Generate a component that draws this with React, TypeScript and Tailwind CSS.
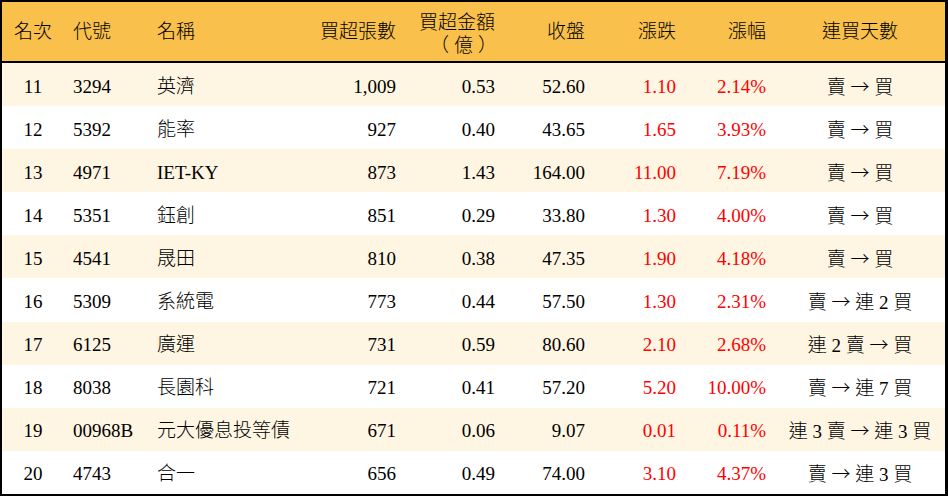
const rows = [
  { rank: 11, code: '3294', name: '英濟', vol: '1,009', amt: '0.53', close: '52.60', chg: '1.10', pct: '2.14%', days: '賣 → 買' },
  { rank: 12, code: '5392', name: '能率', vol: '927', amt: '0.40', close: '43.65', chg: '1.65', pct: '3.93%', days: '賣 → 買' },
  { rank: 13, code: '4971', name: 'IET-KY', vol: '873', amt: '1.43', close: '164.00', chg: '11.00', pct: '7.19%', days: '賣 → 買' },
  { rank: 14, code: '5351', name: '鈺創', vol: '851', amt: '0.29', close: '33.80', chg: '1.30', pct: '4.00%', days: '賣 → 買' },
  { rank: 15, code: '4541', name: '晟田', vol: '810', amt: '0.38', close: '47.35', chg: '1.90', pct: '4.18%', days: '賣 → 買' },
  { rank: 16, code: '5309', name: '系統電', vol: '773', amt: '0.44', close: '57.50', chg: '1.30', pct: '2.31%', days: '賣 → 連 2 買' },
  { rank: 17, code: '6125', name: '廣運', vol: '731', amt: '0.59', close: '80.60', chg: '2.10', pct: '2.68%', days: '連 2 賣 → 買' },
  { rank: 18, code: '8038', name: '長園科', vol: '721', amt: '0.41', close: '57.20', chg: '5.20', pct: '10.00%', days: '賣 → 連 7 買' },
  { rank: 19, code: '00968B', name: '元大優息投等債', vol: '671', amt: '0.06', close: '9.07', chg: '0.01', pct: '0.11%', days: '連 3 賣 → 連 3 買' },
  { rank: 20, code: '4743', name: '合一', vol: '656', amt: '0.49', close: '74.00', chg: '3.10', pct: '4.37%', days: '賣 → 連 3 買' },
];

const grid = 'grid grid-cols-[62px_84px_152px_96px_99px_90px_91px_90px_179px] items-center';
const cjk = { fontFamily: '"Noto Sans CJK TC", sans-serif' };

function Days({ text }: { text: string }) {
  const [from, to] = text.split(' → ');
  return (
    <>
      {from} <span style={cjk}>→</span> {to}
    </>
  );
}

export default function App() {
  return (
    <div
      className="w-[948px] h-[496px] bg-white text-black border-2 border-r-[3px] border-black overflow-hidden text-[19px] leading-none font-light"
      style={{ fontFamily: '"Liberation Serif", "Noto Sans CJK TC", serif' }}
    >
      {/* Header */}
      <div className={`${grid} h-[61px] bg-[#f9c04c] border-b-2 border-black whitespace-nowrap`}>
        <div className="text-center">名次</div>
        <div className="pl-[9px]">代號</div>
        <div className="pl-[9px]">名稱</div>
        <div className="text-right">買超張數</div>
        <div className="flex flex-col items-end leading-[21px] mt-[2px]">
          <span>買超金額</span>
          <span className="tracking-[5px] -mr-[7px]" style={cjk}>（億）</span>
        </div>
        <div className="text-right">收盤</div>
        <div className="text-right">漲跌</div>
        <div className="text-right">漲幅</div>
        <div className="text-center pl-[9px]">連買天數</div>
      </div>

      {/* Rows */}
      {rows.map((r, i) => (
        <div
          key={r.rank}
          className={`${grid} h-[43.1px] pt-[3px] whitespace-nowrap ${i % 2 === 0 ? 'bg-[#fef5e2]' : 'bg-white'}`}
        >
          <div className="text-center">{r.rank}</div>
          <div className="pl-[9px]">{r.code}</div>
          <div className="pl-[9px]">{r.name}</div>
          <div className="text-right">{r.vol}</div>
          <div className="text-right">{r.amt}</div>
          <div className="text-right">{r.close}</div>
          <div className="text-right text-[#ff0000]">{r.chg}</div>
          <div className="text-right text-[#ff0000]">{r.pct}</div>
          <div className="text-center pl-[9px]">
            <Days text={r.days} />
          </div>
        </div>
      ))}
    </div>
  );
}
